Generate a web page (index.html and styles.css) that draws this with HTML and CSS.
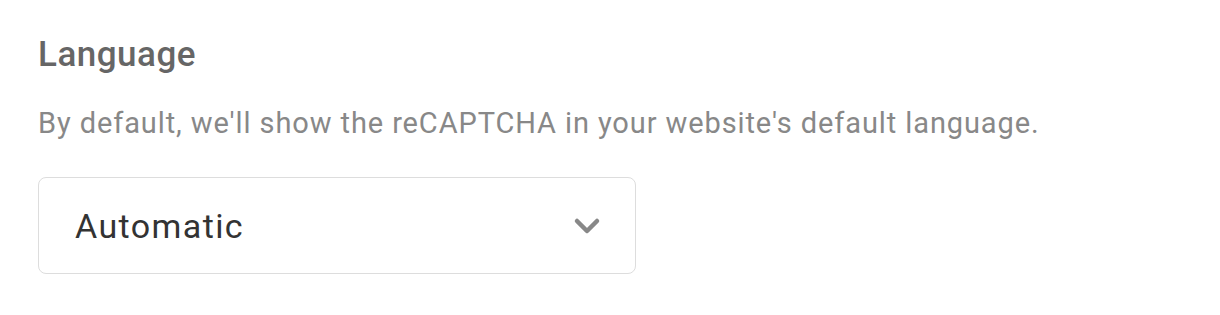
FILE: index.html
```html
<!DOCTYPE html>
<html lang="en">
<head>
  <meta charset="UTF-8">
  <meta name="viewport" content="width=device-width, initial-scale=1.0">
  <title>Language</title>
  <link rel="stylesheet" href="styles.css">
</head>
<body>
  <div class="setting">
    <h2>Language</h2>
    <p class="hint">By default, we'll show the reCAPTCHA in your website's default language.</p>
    <div class="select">
      <span class="select-value">Automatic</span>
      <svg class="chevron" width="28" height="18" viewBox="0 0 28 18">
        <path d="M4 4 L14 14 L24 4" fill="none" stroke="#888" stroke-width="4.5" stroke-linecap="round" stroke-linejoin="round"/>
      </svg>
    </div>
  </div>
</body>
</html>
```

FILE: styles.css
```css
body {
  margin: 0;
  background: #fff;
  font-family: Roboto, "Liberation Sans", sans-serif;
}
.setting {
  padding: 35px 38px;
}
h2 {
  margin: 0;
  font-size: 35px;
  font-weight: 500;
  color: #666;
  line-height: 40px;
  letter-spacing: 0.5px;
}
.hint {
  margin: 30px 0 0;
  font-size: 29px;
  color: #888;
  line-height: 36px;
  letter-spacing: 0.9px;
}
.select {
  margin-top: 36px;
  width: 598px;
  height: 97px;
  border: 1.5px solid #ddd;
  border-radius: 8px;
  display: flex;
  align-items: center;
  justify-content: space-between;
  padding: 0 34px 0 36px;
  box-sizing: border-box;
}
.select-value {
  font-size: 34px;
  color: #333;
  letter-spacing: 1.4px;
}
```
